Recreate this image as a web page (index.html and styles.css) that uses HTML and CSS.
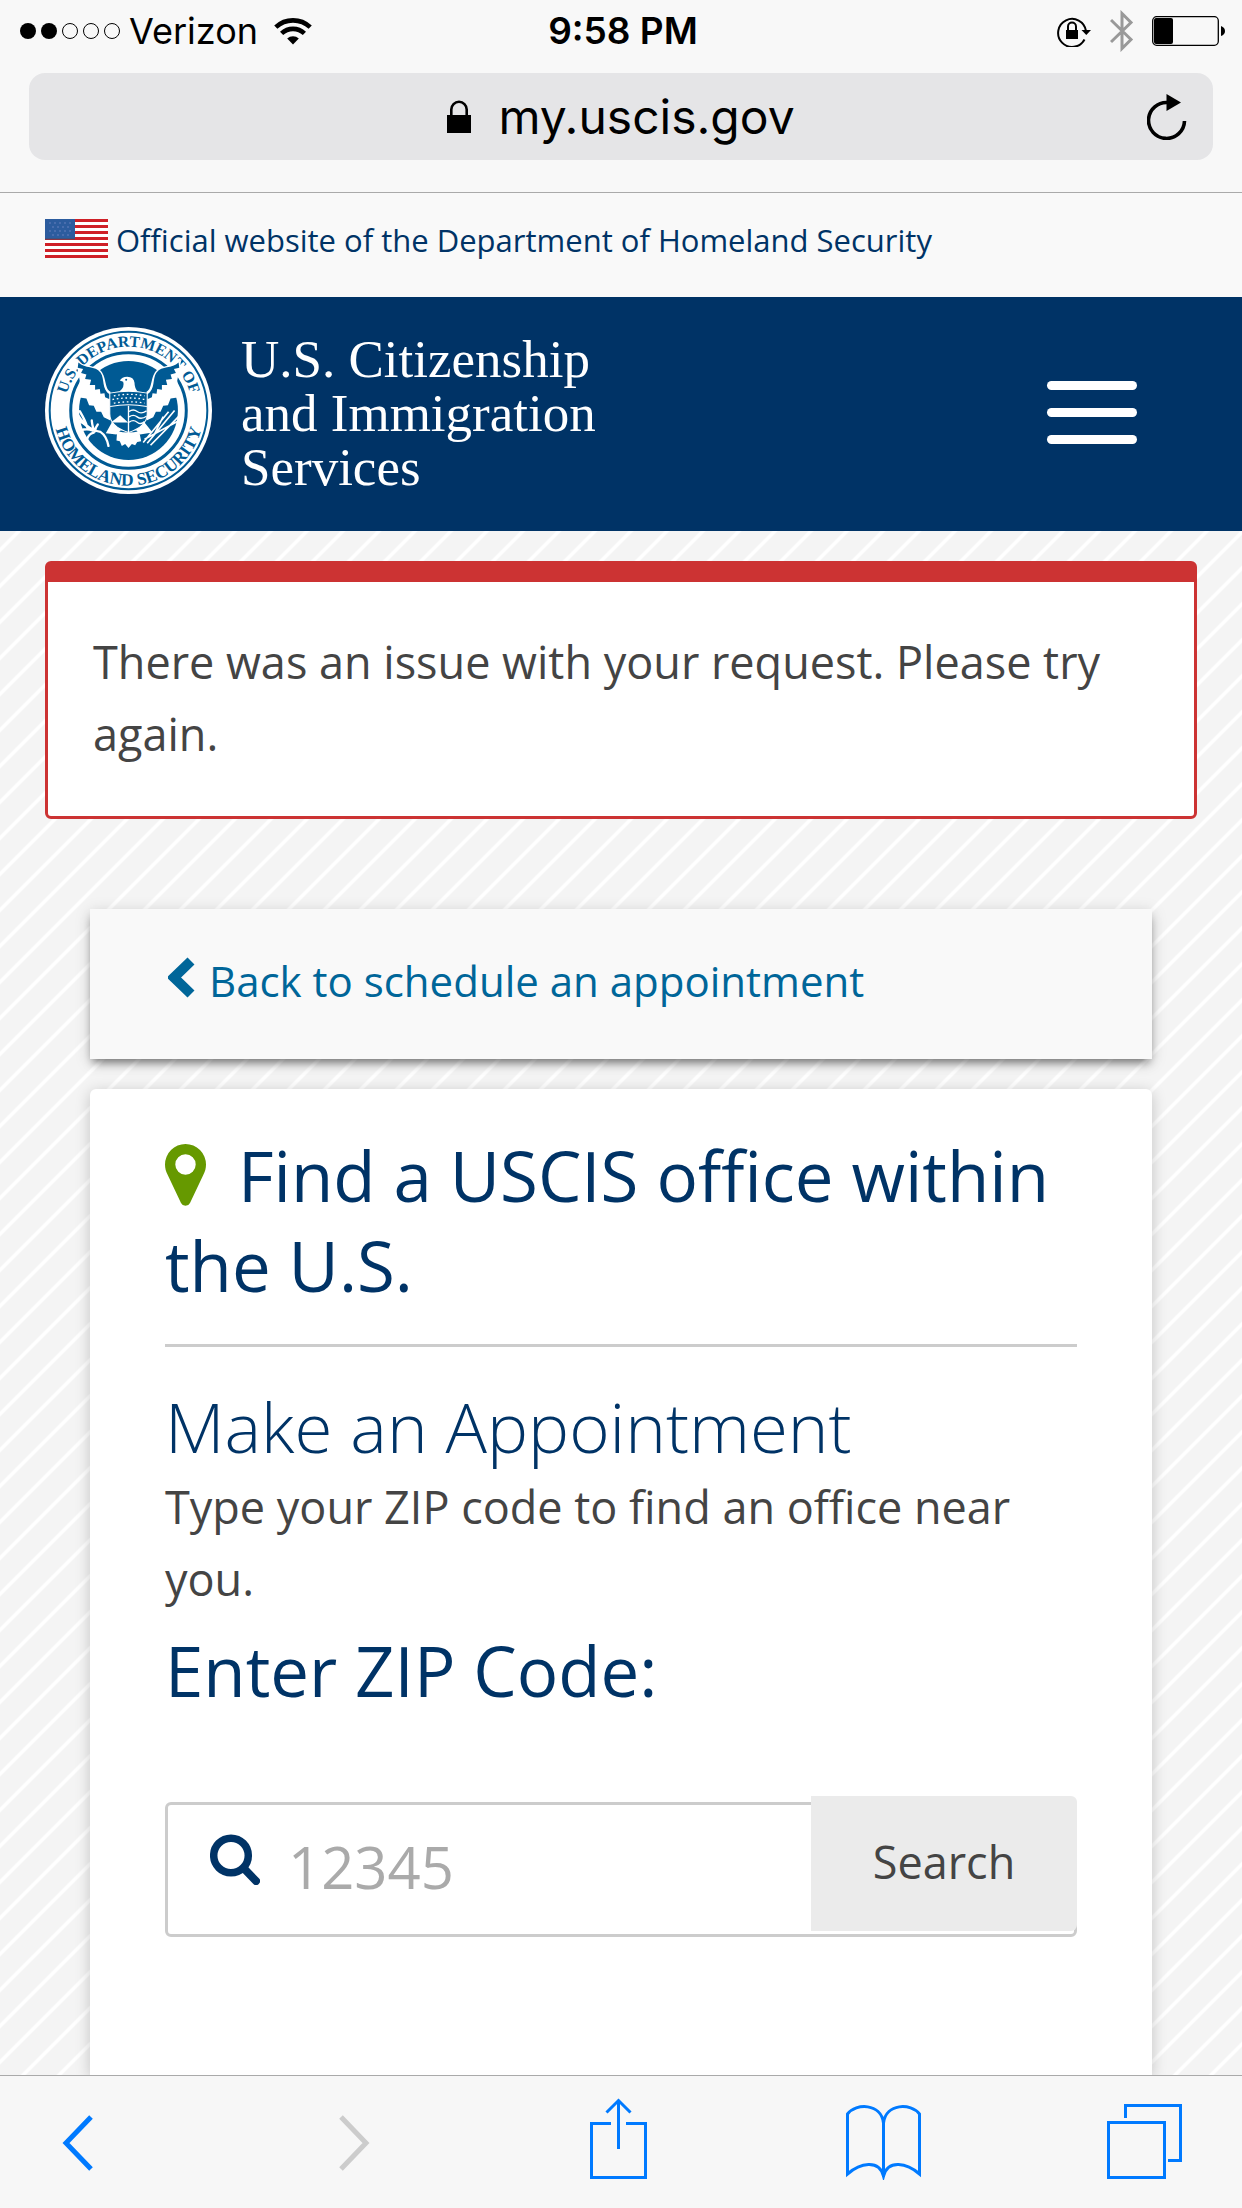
FILE: index.html
```html
<!DOCTYPE html>
<html lang="en">
<head>
<meta charset="utf-8">
<meta name="viewport" content="width=device-width, initial-scale=1">
<title>Find a USCIS office within the U.S.</title>
<link rel="stylesheet" href="styles.css">
</head>
<body>
<div class="browser-top">
  <div class="status">
    <div class="status-left">
      <svg width="101" height="18" viewBox="0 0 101 18" aria-hidden="true">
        <circle cx="8" cy="9" r="8"/><circle cx="29" cy="9" r="8"/>
        <g fill="none" stroke="#000"><circle cx="50" cy="9" r="7.5"/><circle cx="71" cy="9" r="7.5"/><circle cx="92" cy="9" r="7.5"/></g>
      </svg>
      <span class="carrier">Verizon</span>
      <svg class="wifi" width="38" height="28" viewBox="0 0 38 28" aria-hidden="true">
        <g fill="none" stroke="#000" stroke-width="4.6"><path d="M1.8 10.2a25 25 0 0 1 34.4 0"/><path d="M7.6 16.4a16.500 16.500 0 0 1 22.800 0"/></g>
        <path d="M13.200 21.500a8.500 8.500 0 0 1 11.600 0L19 27.500z"/>
      </svg>
    </div>
    <span class="time">9:58 PM</span>
    <div class="status-right">
      <svg width="35" height="32" viewBox="0 0 35 32" aria-hidden="true">
        <path d="M27.500 24.500A14 14 0 1 1 29 16" fill="none" stroke="#000" stroke-width="2"/>
        <path d="M24.500 15h9.500l-4.700 5z"/><rect x="9" y="15" width="12" height="9"/>
        <path d="M11 15v-3.500a4 4 0 0 1 8 0V15" fill="none" stroke="#000" stroke-width="2"/>
      </svg>
      <svg width="24" height="42" viewBox="0 0 24 42" aria-hidden="true"><path d="M1 10l20 19.500-9 9V3.500l9 9L1 32" fill="none" stroke="#999" stroke-width="3"/></svg>
      <svg width="74" height="30" viewBox="0 0 74 30" aria-hidden="true">
        <rect x=".7" y=".7" width="65.600" height="28.600" rx="4" fill="none" stroke="#000" stroke-width="1.300"/>
        <rect x="2" y="2" width="19" height="26" rx="2"/><path d="M69 10q4 1.500 4 5t-4 5z"/>
      </svg>
    </div>
  </div>
  <div class="address">
    <div class="address-site">
      <svg width="24" height="34" viewBox="0 0 24 34" aria-hidden="true"><rect y="15" width="24" height="18"/><path d="M4.300 16V9.500a7.700 7.700 0 0 1 15.400 0V16" fill="none" stroke="#000" stroke-width="2.600"/></svg>
      <span>my.uscis.gov</span>
    </div>
    <button class="reload" type="button" aria-label="Reload">
      <svg width="40" height="46" viewBox="0 0 40 46" aria-hidden="true"><path d="M21 8.500A18 18 0 1 0 37.500 27" fill="none" stroke="#000" stroke-width="3.600"/><path d="M19.500 0L34 8.500 19.500 17z"/></svg>
    </button>
  </div>
</div>

<div class="gov-banner">
  <svg class="flag" width="63" height="39" viewBox="0 0 63 39" aria-hidden="true">
    <rect width="63" height="39" fill="#fff"/>
    <path d="M0 1.500h63M0 7.500h63M0 13.500h63M0 19.500h63M0 25.500h63M0 31.500h63M0 37.500h63" stroke="#cf2027" stroke-width="3"/>
    <rect width="30" height="20" fill="#2c5c9e"/>
    <path d="M4 4h24M7 8h20M4 12h24M7 16h20" stroke="#5273b3" stroke-width="1.500" stroke-dasharray="2 3"/>
    <path d="M0 20h30" stroke="#4b4a63" stroke-width="1"/>
  </svg>
  <span>Official website of the Department of Homeland Security</span>
</div>

<header class="site-header">
  <a class="brand" href="#">
    <svg class="seal" width="167" height="167" viewBox="46 52 500 500" aria-hidden="true">
      <defs>
        <path id="arc-top" d="M105 302a191 191 0 0 1 382 0"/>
        <path id="arc-bottom" d="M71 302a225 225 0 0 0 450 0"/>
      </defs>
      <circle cx="296" cy="302" r="250" fill="#fff"/>
      <circle cx="296" cy="302" r="236" fill="none" stroke="#005a94" stroke-width="6"/>
      <circle cx="296" cy="302" r="173" fill="none" stroke="#005a94" stroke-width="9"/>
      <circle cx="296" cy="302" r="148" fill="#005a94"/>
      <g class="seal-text">
        <text text-anchor="middle" font-size="47"><textPath href="#arc-top" startOffset="50%">U.S. DEPARTMENT OF</textPath></text>
        <text text-anchor="middle" font-size="52"><textPath href="#arc-bottom" startOffset="50%">HOMELAND SECURITY</textPath></text>
      </g>
      <g>
        <path d="M138 150L150 212L144 262L170 266L178 286L192 288L200 306L214 306L222 322L242 332V246C222 236 232 190 204 176C178 164 152 168 138 150z" fill="#fff"/>
        <path d="M146 158C166 178 196 166 212 188C226 208 214 236 240 254V268L226 262L224 250L212 252L210 238L196 240L196 226L180 226L184 210L166 208L170 194L154 190L160 178L144 174z" fill="#005a94"/>
      </g>
      <g transform="matrix(-1 0 0 1 592 0)">
        <path d="M138 150L150 212L144 262L170 266L178 286L192 288L200 306L214 306L222 322L242 332V246C222 236 232 190 204 176C178 164 152 168 138 150z" fill="#fff"/>
        <path d="M146 158C166 178 196 166 212 188C226 208 214 236 240 254V268L226 262L224 250L212 252L210 238L196 240L196 226L180 226L184 210L166 208L170 194L154 190L160 178L144 174z" fill="#005a94"/>
      </g>
      <path d="M270 212q6-10 22-11q20 0 22 18q0 16 10 27h-56q18-14 12-30z" fill="#fff"/>
      <circle cx="289" cy="210" r="3" fill="#005a94"/>
      <path d="M228 370l18-32h98l24 30-38 6-10-12h-48l-12 12z" fill="#fff"/>
      <path d="M240 250q56-12 112 0v62q0 38-56 56q-56-18-56-56z" fill="#005a94" stroke="#fff" stroke-width="3"/>
      <path d="M241 290q55-10 110 0" fill="none" stroke="#fff" stroke-width="3"/>
      <path d="M252 258q46-9 92 0M248 269q48-9 98 0M252 280q46-8 92 0" fill="none" stroke="#fff" stroke-width="4" stroke-dasharray="5 8"/>
      <path d="M243 338l28-22 24 22z" fill="#fff"/>
      <path d="M296 288v78M298 305q12-9 24 0t28-2M298 321q12-9 24 0t28-2M298 337q12-9 24 0t22-2" fill="none" stroke="#fff" stroke-width="4"/>
      <path d="M262 364q34 8 66 0l6 30-12 2-6 10-10-4-10 12-10-12-10 6-6-14-10-2z" fill="#fff"/>
      <g fill="none" stroke="#fff">
        <path d="M136 300q30 60 76 66q18 12 24 42M150 304q20 34 22 48M140 330q22 8 34 22M152 362q20-8 36 0M186 332q2 20 8 30M204 344q-8 10-8 20M172 388q4-16 20-20" stroke-width="7" stroke-linecap="round"/>
        <path d="M340 398L416 306M352 400L434 302M362 406L448 318M344 388L452 330M372 376L400 320" stroke-width="5"/>
      </g>
    </svg>
    <span class="brand-name">U.S. Citizenship<br>and Immigration<br>Services</span>
  </a>
  <button class="menu" type="button" aria-label="Menu"><i></i><i></i><i></i></button>
</header>

<main class="page">
  <div class="alert" role="alert">There was an issue with your request. Please try again.</div>

  <nav class="back-card">
    <a class="back-link" href="#">
      <svg width="27" height="42" viewBox="0 0 27 42" aria-hidden="true"><path d="M23 4L6 20.500l17 16.500" fill="none" stroke="#069" stroke-width="10"/></svg>
      <span>Back to schedule an appointment</span>
    </a>
  </nav>

  <section class="card">
    <h1 class="card-title"><svg class="pin" width="41" height="62" viewBox="0 0 41 62" aria-hidden="true"><path d="M20.500 0A20.500 20.500 0 0 1 41 20.500c0 4-1 7-2.500 10L25 59a5 5 0 0 1-9 0L2.500 30.500C1 27.500 0 24.500 0 20.500A20.500 20.500 0 0 1 20.500 0zm0 10.300a10.200 10.200 0 1 0 0 20.400 10.200 10.200 0 0 0 0-20.400z" fill="#690"/></svg>Find a USCIS office within the U.S.</h1>
    <h2 class="section-title">Make an Appointment</h2>
    <p class="lead">Type your ZIP code to find an office near you.</p>
    <form class="zip-form" action="#">
      <label class="zip-label" for="zip">Enter ZIP Code:</label>
      <div class="zip-field">
        <svg class="zip-icon" width="50" height="51" viewBox="0 0 50 51" aria-hidden="true"><circle cx="21" cy="21.500" r="17.300" fill="none" stroke="#036" stroke-width="7.500"/><path d="M34 34.500L46 47" stroke="#036" stroke-width="8" stroke-linecap="round"/></svg>
        <input class="zip-input" id="zip" type="text" inputmode="numeric" placeholder="12345">
        <button class="zip-button" type="submit">Search</button>
      </div>
    </form>
  </section>
</main>

<nav class="browser-bottom" aria-label="Browser">
  <button type="button" aria-label="Back"><svg width="75" height="82" viewBox="0 0 75 82"><path d="M51 19L26 45l25 26"/></svg></button>
  <button type="button" aria-label="Forward" disabled><svg width="75" height="82" viewBox="0 0 75 82"><path d="M24 19l25 26-25 26"/></svg></button>
  <button type="button" aria-label="Share"><svg width="75" height="82" viewBox="0 0 75 82"><path d="M30 25.500H10.500v54h54v-54H45M37.500 51V3M25.500 14.500l12-12 12 12"/></svg></button>
  <button type="button" aria-label="Bookmarks"><svg width="75" height="82" viewBox="0 0 75 82"><path d="M37.500 79V25C35 5 10 5 1.500 16v60C14 65 33 61 37.500 78C42 61 61 65 73.500 76V16C65 5 40 5 37.500 25"/></svg></button>
  <button type="button" aria-label="Tabs"><svg width="75" height="82" viewBox="0 0 75 82"><path d="M1.500 24.500h56v55h-56zM18.500 20V7.500h55v55H61"/></svg></button>
</nav>
</body>
</html>
```
FILE: styles.css
```css
* {
  box-sizing: border-box;
}

body {
  display: flex;
  flex-direction: column;
  min-height: 100vh;
  margin: 0;
  color: #444;
  font-family: "Open Sans", "Noto Sans", sans-serif;
  font-size: 45px;
  line-height: 72px;
  background-color: #f4f4f4;
  background-image: linear-gradient(135deg, #f4f4f4 9%, #fff 12%, #fff 16%, #f4f4f4 19%, #f4f4f4 59%, #fff 62%, #fff 66%, #f4f4f4 69%);
  background-size: 36px 36px;
}

svg {
  display: block;
  flex: none;
}

button {
  margin: 0;
  padding: 0;
  border: 0;
  background: none;
  font: inherit;
  color: inherit;
}

/* Browser chrome */
.browser-top {
  padding-bottom: 32px;
  border-bottom: 1px solid #aaa;
  background: #f8f8f8;
  color: #000;
  font-family: Inter, "Liberation Sans", sans-serif;
}

.status {
  display: grid;
  grid-template-columns: 1fr auto 1fr;
  align-items: center;
  height: 62px;
  padding: 0 16px 0 20px;
  font-size: 36px;
  line-height: 62px;
}

.status-left,
.status-right {
  display: flex;
  align-items: center;
}

.carrier {
  margin: 0 16px 0 8px;
}

.time {
  font-size: 37px;
  font-weight: 600;
}

.status-right {
  justify-content: flex-end;
  gap: 18px;
}

.address {
  display: grid;
  grid-template-columns: 1fr auto 1fr;
  align-items: center;
  height: 87px;
  margin: 11px 29px 0;
  padding: 0 26px;
  border-radius: 16px;
  background: #e5e5e7;
  font-size: 48px;
}

.address-site {
  grid-column: 2;
  display: flex;
  align-items: center;
  gap: 27px;
}

.reload {
  justify-self: end;
}

/* Site header */
.gov-banner {
  display: flex;
  align-items: center;
  gap: 8px;
  padding: 26px 45px 36px;
  background: #f9f9f9;
  color: #036;
  font-size: 31px;
  line-height: 42px;
}

.flag {
  margin-bottom: 3px;
}

.site-header {
  display: flex;
  align-items: center;
  justify-content: space-between;
  padding: 30px 105px 37px 45px;
  background: #036;
}

.brand {
  display: flex;
  align-items: center;
  gap: 29px;
  color: #fff;
  text-decoration: none;
}

.brand-name {
  padding-top: 4px;
  font-family: "Liberation Serif", serif;
  font-size: 53px;
  line-height: 54px;
}

.seal-text {
  fill: #005a94;
  font-family: "Liberation Serif", serif;
  font-weight: 700;
}

.menu {
  display: grid;
  gap: 18px;
  width: 90px;
  padding-top: 4px;
}

.menu i {
  height: 9px;
  border-radius: 5px;
  background: #fff;
}

/* Page */
.page {
  flex: 1;
  display: flex;
  flex-direction: column;
  padding: 30px 45px 0;
}

.alert {
  padding: 44px 45px 46px;
  border: 3px solid #c33;
  border-top-width: 21px;
  border-radius: 6px;
  background: #fff;
}

.back-card {
  margin: 90px 45px 30px;
  padding: 36px 78px 42px;
  background: #f9f9f9;
  box-shadow: 0 6px 9px -3px rgba(0, 0, 0, .5), 0 3px 15px rgba(0, 0, 0, .15);
}

.back-link {
  display: flex;
  align-items: center;
  gap: 14px;
  color: #069;
  font-size: 42px;
  text-decoration: none;
}

.back-link svg {
  margin-bottom: 6px;
}

.card {
  flex: 1;
  margin: 0 45px;
  padding: 41px 75px 60px;
  border-radius: 6px 6px 0 0;
  background: #fff;
  box-shadow: 0 3px 15px rgba(0, 0, 0, .2);
}

.card-title,
.section-title,
.zip-label {
  display: block;
  margin: 0;
  color: #036;
  font-size: 69px;
  font-weight: 400;
  line-height: 90px;
}

.card-title {
  padding-bottom: 34px;
  border-bottom: 3px solid #ccc;
}

.pin {
  display: inline-block;
  margin-right: 32px;
  vertical-align: -4px;
}

.section-title {
  margin-top: 34px;
  font-weight: 300;
}

.lead {
  margin: 0 0 10px;
}

.zip-field {
  position: relative;
  margin-top: 87px;
}

.zip-icon {
  position: absolute;
  top: 32px;
  left: 45px;
}

.zip-input {
  display: block;
  width: 100%;
  height: 135px;
  padding: 0 280px 6px 120px;
  border: 3px solid #ccc;
  border-radius: 6px;
  background: #fff;
  color: #444;
  font: inherit;
  font-size: 58px;
}

.zip-input::placeholder {
  color: #aaa;
  opacity: 1;
}

.zip-button {
  position: absolute;
  top: -6px;
  right: 0;
  width: 266px;
  height: 135px;
  padding-bottom: 3px;
  border-radius: 0 6px 6px 0;
  background: #ebebeb;
  font-size: 45px;
}

.browser-bottom {
  position: sticky;
  bottom: 0;
  display: grid;
  grid-template-columns: 277fr 264fr 265fr 261fr 75px;
  padding: 22px 60px 28px 40px;
  border-top: 1px solid #aaa;
  background: #f7f7f7;
  color: #007aff;
}

.browser-bottom button {
  justify-self: start;
}

.browser-bottom button:disabled {
  color: #ccc;
}

.browser-bottom path {
  fill: none;
  stroke: currentColor;
  stroke-width: 3;
}

.browser-bottom button:first-child path,
.browser-bottom button:disabled path {
  stroke-width: 5;
}
```
